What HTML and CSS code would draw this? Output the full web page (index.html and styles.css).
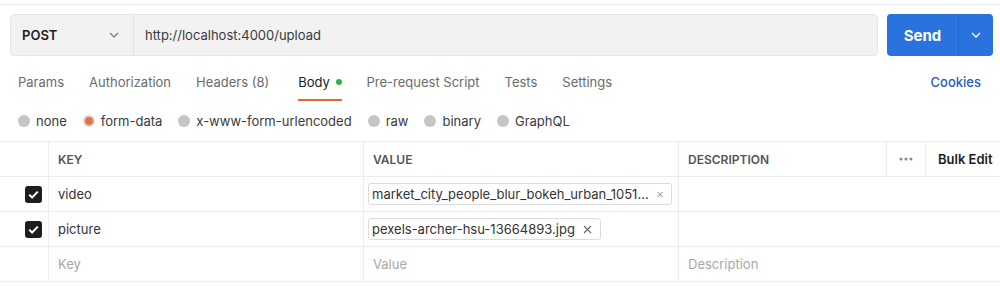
FILE: index.html
```html
<!DOCTYPE html>
<html lang="en">
<head>
    <meta charset="UTF-8">
    <meta name="viewport" content="width=device-width, initial-scale=1.0">
    <title>Request</title>
    <link rel="stylesheet" href="styles.css">
</head>
<body>
    <div class="topline"></div>

    <div class="request-bar">
        <div class="url-box">
            <div class="method">
                <span>POST</span>
                <svg class="chev" width="10" height="6" viewBox="0 0 10 6"><path d="M1 1l4 4 4-4" fill="none" stroke="#7a7a7a" stroke-width="1.2"/></svg>
            </div>
            <div class="url">http://localhost:4000/upload</div>
        </div>
        <div class="send">
            <span class="send-label">Send</span>
            <span class="send-more">
                <svg width="10" height="6" viewBox="0 0 10 6"><path d="M1 1l4 4 4-4" fill="none" stroke="#fff" stroke-width="1.3"/></svg>
            </span>
        </div>
    </div>

    <div class="tabs">
        <span class="tab">Params</span>
        <span class="tab">Authorization</span>
        <span class="tab headers">Headers <span class="count">(8)</span></span>
        <span class="tab active">Body <i class="dot"></i></span>
        <span class="tab">Pre-request Script</span>
        <span class="tab">Tests</span>
        <span class="tab">Settings</span>
        <span class="cookies">Cookies</span>
    </div>

    <div class="body-types">
        <span class="radio"><i class="circle"></i>none</span>
        <span class="radio"><i class="circle on"></i>form-data</span>
        <span class="radio"><i class="circle"></i>x-www-form-urlencoded</span>
        <span class="radio"><i class="circle"></i>raw</span>
        <span class="radio"><i class="circle"></i>binary</span>
        <span class="radio"><i class="circle"></i>GraphQL</span>
    </div>

    <div class="kv-table">
        <div class="cell head first"></div>
        <div class="cell head">KEY</div>
        <div class="cell head">VALUE</div>
        <div class="cell head">DESCRIPTION</div>
        <div class="cell head more">
            <svg width="14" height="4" viewBox="0 0 14 4"><circle cx="2" cy="2" r="1.5" fill="#888"/><circle cx="7" cy="2" r="1.5" fill="#888"/><circle cx="12" cy="2" r="1.5" fill="#888"/></svg>
        </div>
        <div class="cell head bulk">Bulk Edit</div>

        <div class="cell first"><span class="check"><svg width="11" height="9" viewBox="0 0 11 9"><path d="M1.2 4.6l2.9 2.9L9.8 1.6" fill="none" stroke="#fff" stroke-width="2"/></svg></span></div>
        <div class="cell">video</div>
        <div class="cell"><span class="chip wide">market_city_people_blur_bokeh_urban_1051... <svg class="x" width="9" height="9" viewBox="0 0 9 9"><path d="M1 1l7 7M8 1L1 8" stroke="#666" stroke-width="1.1"/></svg></span></div>
        <div class="cell desc"></div>

        <div class="cell first"><span class="check"><svg width="11" height="9" viewBox="0 0 11 9"><path d="M1.2 4.6l2.9 2.9L9.8 1.6" fill="none" stroke="#fff" stroke-width="2"/></svg></span></div>
        <div class="cell">picture</div>
        <div class="cell"><span class="chip">pexels-archer-hsu-13664893.jpg <svg class="x" width="9" height="9" viewBox="0 0 9 9"><path d="M1 1l7 7M8 1L1 8" stroke="#666" stroke-width="1.1"/></svg></span></div>
        <div class="cell desc"></div>

        <div class="cell first"></div>
        <div class="cell placeholder">Key</div>
        <div class="cell placeholder">Value</div>
        <div class="cell desc placeholder">Description</div>
    </div>
</body>
</html>
```

FILE: styles.css
```css
body {
    margin: 0;
    font-family: Inter, "Open Sans", sans-serif;
    font-size: 13px;
    color: #212121;
    background: #fff;
}
.topline {
    height: 4px;
    border-bottom: 1px solid #ebebeb;
}
.request-bar {
    display: flex;
    margin: 9px 0 0 10px;
    height: 42px;
}
.url-box {
    display: flex;
    width: 866px;
    background: #f2f2f2;
    border: 1px solid #e6e6e6;
    border-radius: 4px;
}
.method {
    box-sizing: border-box;
    width: 123px;
    display: flex;
    align-items: center;
    justify-content: space-between;
    padding: 0 14px 0 11px;
    border-right: 1px solid #e3e3e3;
    font-weight: 600;
    color: #1d1d1d;
}
.url {
    display: flex;
    align-items: center;
    padding-left: 11px;
    color: #3a3a3a;
}
.send {
    display: flex;
    margin-left: 9px;
    width: 106px;
    background: #2a72de;
    border-radius: 4px;
    color: #fff;
}
.send-label {
    width: 71px;
    display: flex;
    align-items: center;
    justify-content: center;
    font-weight: 700;
    font-size: 15px;
}
.send-more {
    flex: 1;
    display: flex;
    align-items: center;
    justify-content: center;
    border-left: 1px solid #2466c9;
}
.tabs {
    display: flex;
    align-items: center;
    height: 36px;
    margin-top: 8px;
    padding-left: 18px;
    padding-right: 19px;
}
.tab {
    position: relative;
    margin-right: 25px;
    color: #6b6b6b;
    line-height: 36px;
}
.tab.headers {
    margin-right: 29px;
}
.tab.active {
    color: #212121;
}
.tab.active::after {
    content: "";
    position: absolute;
    left: 0;
    right: 0;
    bottom: -1px;
    height: 2px;
    background: #e0693a;
}
.dot {
    display: inline-block;
    width: 6px;
    height: 6px;
    border-radius: 50%;
    background: #2eb34b;
    margin-left: 2px;
    vertical-align: 2px;
}
.cookies {
    margin-left: auto;
    color: #1f5db8;
    font-weight: 500;
}
.body-types {
    display: flex;
    align-items: center;
    height: 41px;
    padding-left: 18px;
}
.radio {
    display: flex;
    align-items: center;
    margin-right: 16px;
    color: #3a3a3a;
}
.circle {
    width: 12px;
    height: 12px;
    border-radius: 50%;
    background: #c6c6c6;
    margin-right: 6px;
    box-sizing: border-box;
}
.circle.on {
    background: #ec6f42;
    border: 2px solid #d6d6d6;
}
.kv-table {
    display: grid;
    grid-template-columns: 48px 315px 315px 208px 39px 1fr;
    border-top: 1px solid #ececec;
}
.cell {
    height: 34px;
    display: flex;
    align-items: center;
    padding-left: 9px;
    border-bottom: 1px solid #ececec;
    border-left: 1px solid #ececec;
    color: #333;
    overflow: hidden;
    white-space: nowrap;
}
.cell.first {
    border-left: none;
    padding-left: 0;
    justify-content: flex-end;
    padding-right: 6px;
}
.cell.head {
    font-size: 12px;
    font-weight: 600;
    color: #555;
}
.cell.head.more {
    padding-left: 12px;
}
.cell.head.bulk {
    font-size: 13px;
    color: #1e1e1e;
    padding-left: 12px;
}
.cell.desc {
    grid-column: span 3;
}
.cell.placeholder {
    color: #a8a8a8;
}
.check {
    width: 17px;
    height: 17px;
    border-radius: 3px;
    background: #1e1e1e;
    display: flex;
    align-items: center;
    justify-content: center;
}
.chip {
    display: flex;
    align-items: center;
    height: 20px;
    margin-left: -5px;
    padding: 0 8px 0 3px;
    border: 1px solid #dcdcdc;
    border-radius: 3px;
    color: #333;
}
.chip.wide {
    width: 291px;
    justify-content: space-between;
}
.x {
    margin-left: 8px;
}
```
